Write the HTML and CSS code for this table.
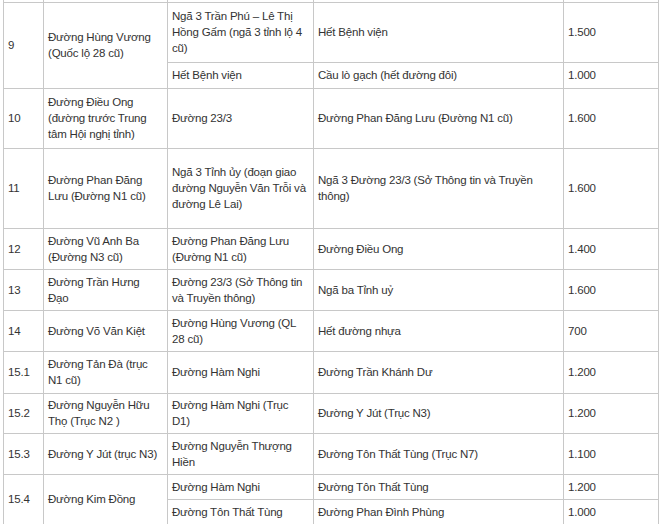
FILE: index.html
```html
<!DOCTYPE html>
<html lang="vi">
<head>
<meta charset="utf-8">
<link rel="stylesheet" href="styles.css">
</head>
<body>
<div class="wrap">
<table class="price">
<colgroup>
<col class="c1"><col class="c2"><col class="c3"><col class="c4"><col class="c5">
</colgroup>
<tbody>
<tr class="h-top"><td></td><td></td><td></td><td></td><td></td></tr>
<tr class="h60">
<td rowspan="2">9</td>
<td rowspan="2">Đường Hùng Vương (Quốc lộ 28 cũ)</td>
<td>Ngã 3 Trần Phú – Lê Thị Hồng Gấm (ngã 3 tỉnh lộ 4 cũ)</td>
<td>Hết Bệnh viện</td>
<td>1.500</td>
</tr>
<tr class="h26">
<td>Hết Bệnh viện</td>
<td>Cầu lò gạch (hết đường đôi)</td>
<td>1.000</td>
</tr>
<tr class="h60">
<td>10</td>
<td>Đường Điều Ong (đường trước Trung tâm Hội nghị tỉnh)</td>
<td>Đường 23/3</td>
<td>Đường Phan Đăng Lưu (Đường N1 cũ)</td>
<td>1.600</td>
</tr>
<tr class="h80">
<td>11</td>
<td>Đường Phan Đăng Lưu (Đường N1 cũ)</td>
<td>Ngã 3 Tỉnh ủy (đoạn giao đường Nguyễn Văn Trỗi và đường Lê Lai)</td>
<td>Ngã 3 Đường 23/3 (Sở Thông tin và Truyền thông)</td>
<td>1.600</td>
</tr>
<tr class="h41">
<td>12</td>
<td>Đường Vũ Anh Ba (Đường N3 cũ)</td>
<td>Đường Phan Đăng Lưu (Đường N1 cũ)</td>
<td>Đường Điều Ong</td>
<td>1.400</td>
</tr>
<tr class="h41">
<td>13</td>
<td>Đường Trần Hưng Đạo</td>
<td>Đường 23/3 (Sở Thông tin và Truyền thông)</td>
<td>Ngã ba Tỉnh uỷ</td>
<td>1.600</td>
</tr>
<tr class="h41">
<td>14</td>
<td>Đường Võ Văn Kiệt</td>
<td>Đường Hùng Vương (QL 28 cũ)</td>
<td>Hết đường nhựa</td>
<td>700</td>
</tr>
<tr class="h42">
<td>15.1</td>
<td>Đường Tản Đà (trục N1 cũ)</td>
<td>Đường Hàm Nghi</td>
<td>Đường Trần Khánh Dư</td>
<td>1.200</td>
</tr>
<tr class="h40">
<td>15.2</td>
<td>Đường Nguyễn Hữu Thọ (Trục N2 )</td>
<td>Đường Hàm Nghi (Trục D1)</td>
<td>Đường Y Jút (Trục N3)</td>
<td>1.200</td>
</tr>
<tr class="h41">
<td>15.3</td>
<td>Đường Y Jút (trục N3)</td>
<td>Đường Nguyễn Thượng Hiền</td>
<td>Đường Tôn Thất Tùng (Trục N7)</td>
<td>1.100</td>
</tr>
<tr class="h25">
<td rowspan="2">15.4</td>
<td rowspan="2">Đường Kim Đồng</td>
<td>Đường Hàm Nghi</td>
<td>Đường Tôn Thất Tùng</td>
<td>1.200</td>
</tr>
<tr class="h25">
<td>Đường Tôn Thất Tùng</td>
<td>Đường Phan Đình Phùng</td>
<td>1.000</td>
</tr>
</tbody>
</table>
<div class="green-bar"></div>
</div>
</body>
</html>
```

FILE: styles.css
```css
html, body {
  margin: 0;
  padding: 0;
  background: #fff;
}
.wrap {
  padding-left: 3px;
}
.price {
  border-collapse: collapse;
  table-layout: fixed;
  width: 655px;
  font-family: "Liberation Sans", Arial, sans-serif;
  font-size: 11.5px;
  letter-spacing: -0.2px;
  line-height: 16px;
  color: #333;
}
.c1 { width: 40px; }
.c2 { width: 124px; }
.c3 { width: 146px; }
.c4 { width: 250px; }
.c5 { width: 95px; }
.price td {
  border: 1px solid #c8c8c8;
  padding: 0 4px;
  vertical-align: middle;
}
.h-top td { border-top: 0; padding: 0; }
.h-top { height: 2px; }
.h25 { height: 25px; }
.h26 { height: 26px; }
.h40 { height: 40px; }
.h41 { height: 41px; }
.h42 { height: 42px; }
.h60 { height: 60px; }
.h80 { height: 80px; }
.green-bar {
  width: 14px;
  height: 2px;
  margin-left: -3px;
  background: #8cc63f;
}
```
